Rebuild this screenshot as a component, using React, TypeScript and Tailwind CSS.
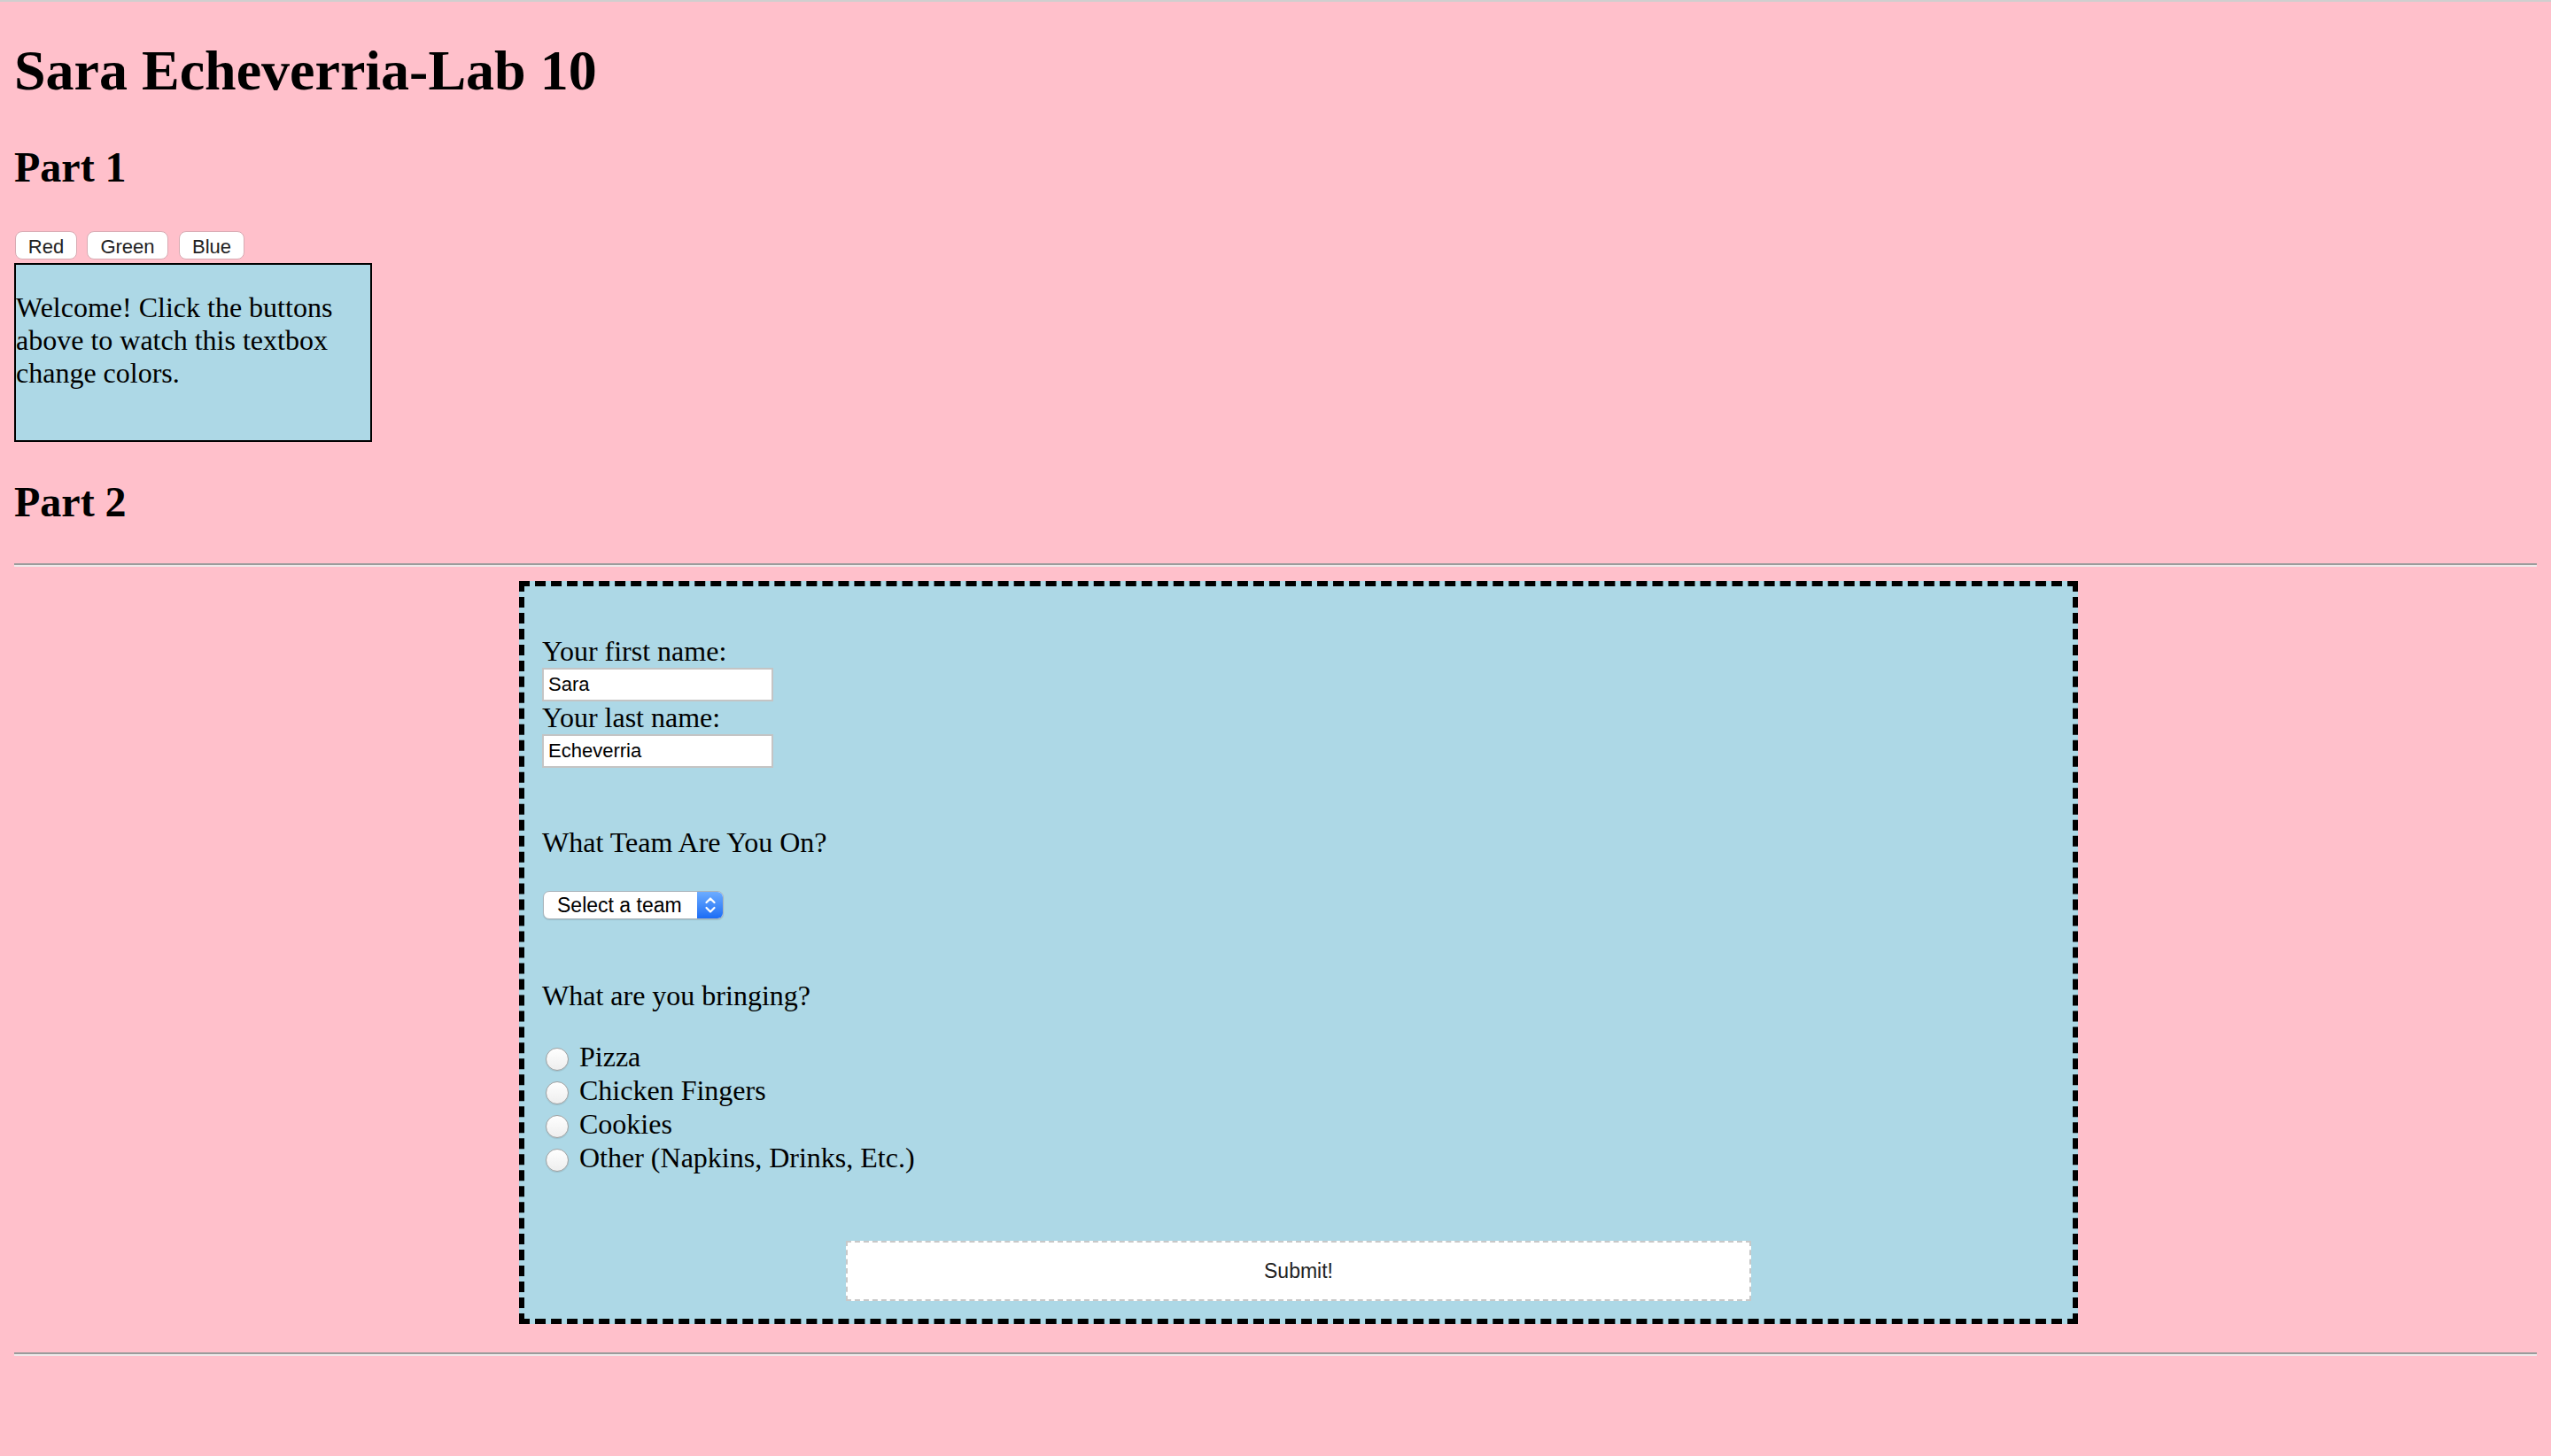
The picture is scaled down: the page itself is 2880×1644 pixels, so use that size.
import { useState } from 'react';

const serif = "font-['Liberation_Serif','Times_New_Roman',serif]";
const sans = "font-['Liberation_Sans',Arial,sans-serif]";

function Rule() {
  return <div className="h-[4px] w-full border-t-2 border-b-2 border-t-[#9b9b9b] border-b-[#efe9ea]" />;
}

function Radio({ label, name, checked, onPick }: { label: string; name: string; checked: boolean; onPick: () => void }) {
  return (
    <label className="flex h-[38px] items-start">
      <input
        type="radio"
        name={name}
        checked={checked}
        onChange={onPick}
        className="ml-[4px] mt-[10px] h-[26px] w-[26px] shrink-0 appearance-none rounded-full border border-[#a0a0a0] bg-gradient-to-b from-white to-[#eeeeee] shadow-[0_1px_1px_rgba(0,0,0,0.1)] checked:border-[6px] checked:border-[#2f7cf6]"
      />
      <span className="ml-[12px] mt-[1px] text-[32px] leading-[38px]">{label}</span>
    </label>
  );
}

export default function App() {
  const [boxColor, setBoxColor] = useState('bg-[#add8e6]');
  const [first, setFirst] = useState('Sara');
  const [last, setLast] = useState('Echeverria');
  const [food, setFood] = useState('');

  const foods = ['Pizza', 'Chicken Fingers', 'Cookies', 'Other (Napkins, Drinks, Etc.)'];

  return (
    <div className={`min-h-screen w-full bg-[#ffc0cb] text-black ${serif}`}>
      <div className="h-[2px] w-full bg-[#cfcfcf]" />
      <div className="px-[16px]">
        <h1 className="mt-[41px] text-[64px] font-bold leading-[74px]">Sara Echeverria-Lab 10</h1>
        <h2 className="mt-[44px] text-[48px] font-bold leading-[55px]">Part 1</h2>

        <div className={`mt-[45px] ml-[1px] flex gap-[11px] text-[22px] text-[#222] ${sans}`}>
          <button onClick={() => setBoxColor('bg-[#ff6b6b]')} className="h-[32px] w-[70px] rounded-[8px] border border-[#d8abb3] bg-white">
            Red
          </button>
          <button onClick={() => setBoxColor('bg-[#7ddc8a]')} className="h-[32px] w-[92px] rounded-[8px] border border-[#d8abb3] bg-white">
            Green
          </button>
          <button onClick={() => setBoxColor('bg-[#add8e6]')} className="ml-[1px] h-[32px] w-[74px] rounded-[8px] border border-[#d8abb3] bg-white">
            Blue
          </button>
        </div>

        <div className={`mt-[4px] h-[202px] w-[404px] border-2 border-black ${boxColor} pt-[30px] text-[32px] leading-[37px]`}>
          Welcome! Click the buttons above to watch this textbox change colors.
        </div>

        <h2 className="mt-[40px] text-[48px] font-bold leading-[55px]">Part 2</h2>

        <div className="mt-[42px]">
          <Rule />
        </div>

        <form
          onSubmit={(e) => e.preventDefault()}
          className="mt-[16px] ml-[570px] w-[1760px] border-[6px] border-dashed border-black bg-[#add8e6] p-[20px]"
        >
          <div className="mt-[35px] text-[32px] leading-[37px]">Your first name:</div>
          <input
            value={first}
            onChange={(e) => setFirst(e.target.value)}
            className={`block h-[38px] w-[261px] border-2 border-[#c4c4c4] bg-white pl-[5px] text-[22px] text-black outline-none ${sans}`}
          />
          <div className="text-[32px] leading-[37px]">Your last name:</div>
          <input
            value={last}
            onChange={(e) => setLast(e.target.value)}
            className={`block h-[38px] w-[261px] border-2 border-[#c4c4c4] bg-white pl-[5px] text-[22px] text-black outline-none ${sans}`}
          />

          <div className="mt-[66px] text-[32px] leading-[37px]">What Team Are You On?</div>

          <div className={`mt-[36px] ml-[1px] flex h-[32px] w-[204px] overflow-hidden rounded-[7px] border border-[#a9b4bb] bg-white shadow-[0_1px_1px_rgba(0,0,0,0.12)] ${sans}`}>
            <span className="flex-1 pl-[15px] text-[23px] leading-[30px] text-black">Select a team</span>
            <span className="flex w-[29px] items-center justify-center bg-gradient-to-b from-[#6cacff] to-[#1a6cf5]">
              <svg width="14" height="22" viewBox="0 0 14 22" fill="none" stroke="white" strokeWidth="2.2" strokeLinecap="round" strokeLinejoin="round">
                <path d="M2.5 8 L7 3.5 L11.5 8" />
                <path d="M2.5 14 L7 18.5 L11.5 14" />
              </svg>
            </span>
          </div>

          <div className="mt-[68px] text-[32px] leading-[37px]">What are you bringing?</div>

          <div className="mt-[30px] flex flex-col">
            {foods.map((f) => (
              <Radio key={f} label={f} name="food" checked={food === f} onPick={() => setFood(f)} />
            ))}
          </div>

          <button
            type="submit"
            className={`mx-auto mt-[76px] block h-[68px] w-[1022px] border-2 border-dashed border-[#c8c8c8] bg-white text-[23px] text-[#222] ${sans}`}
          >
            Submit!
          </button>
        </form>

        <div className="mt-[32px]">
          <Rule />
        </div>
      </div>
    </div>
  );
}
